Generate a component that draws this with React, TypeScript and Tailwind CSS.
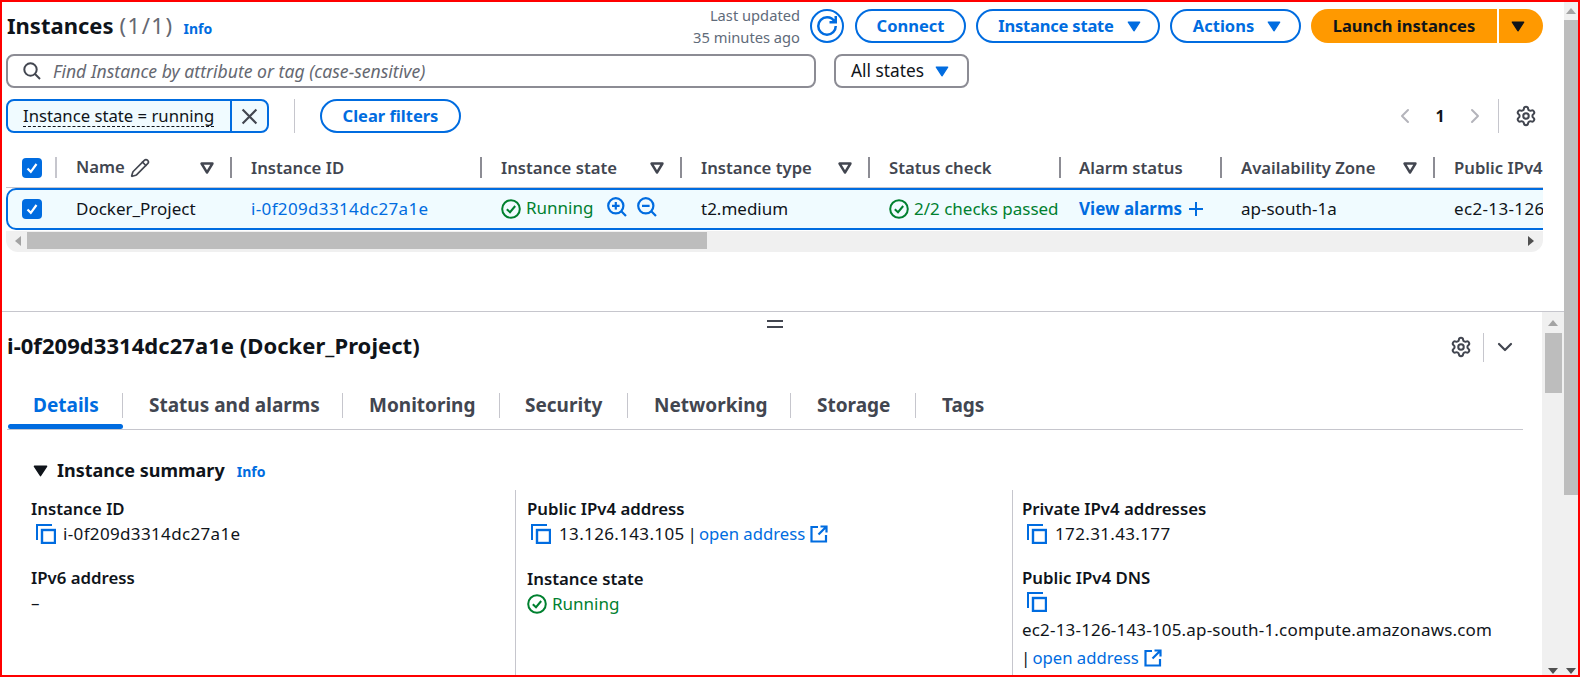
import React from 'react';
import { Pencil, Settings, ChevronDown, ChevronLeft, ChevronRight } from 'lucide-react';

const Caret = ({ className = '', size = 14 }: { className?: string; size?: number }) => (
  <svg viewBox="0 0 16 16" width={size} height={size} className={`shrink-0 ${className}`}>
    <path d="M1.5 3.5h13L8 13.5z" fill="currentColor" stroke="currentColor" strokeWidth="1.5" strokeLinejoin="round" />
  </svg>
);

const FilterCaret = () => (
  <svg viewBox="0 0 16 16" width={16} height={16} className="text-[#424650] shrink-0">
    <path d="M2.5 3.5h11L8 12.5z" fill="none" stroke="currentColor" strokeWidth="2.4" strokeLinejoin="round" />
  </svg>
);

const Copy = ({ className = '' }: { className?: string }) => (
  <svg viewBox="0 0 20 20" width={20} height={20} className={`text-[#006ce0] shrink-0 ${className}`}>
    <path d="M1 16V1h15" fill="none" stroke="currentColor" strokeWidth="2" />
    <rect x="6" y="6" width="13" height="13" fill="#fff" stroke="currentColor" strokeWidth="2.4" />
  </svg>
);

const External = () => (
  <svg viewBox="0 0 18 18" width={18} height={18} className="text-[#006ce0] shrink-0">
    <path d="M8 2H1.5v14.5H16V10M10.5 1.5h6v6M16.5 1.5 8.5 9.5" fill="none" stroke="currentColor" strokeWidth="2.2" />
  </svg>
);

const StatusOk = () => (
  <svg viewBox="0 0 20 20" width={20} height={20} className="text-[#00802f] shrink-0">
    <circle cx="10" cy="10" r="8.8" fill="none" stroke="currentColor" strokeWidth="2" />
    <path d="M5.8 10.2 9 13.2 14.2 7" fill="none" stroke="currentColor" strokeWidth="2" />
  </svg>
);

const Zoom = ({ plus }: { plus?: boolean }) => (
  <svg viewBox="0 0 20 20" width={20} height={20} className="text-[#006ce0] shrink-0">
    <circle cx="8.8" cy="8.8" r="7.6" fill="none" stroke="currentColor" strokeWidth="2.2" />
    <path d="M14.3 14.3 19 19M5 8.8h7.6" fill="none" stroke="currentColor" strokeWidth="2.2" />
    {plus && <path d="M8.8 5v7.6" fill="none" stroke="currentColor" strokeWidth="2.2" />}
  </svg>
);

const Check = () => (
  <div className="w-5 h-5 rounded-[4px] bg-[#006ce0] flex items-center justify-center">
    <svg viewBox="0 0 14 14" width={14} height={14}>
      <path d="M2.5 7.5 5.8 10.8 11.5 3" fill="none" stroke="#fff" strokeWidth="2.2" />
    </svg>
  </div>
);

const OutlineButton = ({ children, className = '' }: { children: React.ReactNode; className?: string }) => (
  <button className={`h-[34px] shrink-0 whitespace-nowrap rounded-full border-2 border-[#006ce0] text-[#006ce0] font-bold text-[16.5px] flex items-center justify-center gap-[13px] ${className}`}>
    {children}
  </button>
);

const Field = ({ label, children, className = '' }: { label: string; children: React.ReactNode; className?: string }) => (
  <div className={className}>
    <div className="text-[16.8px] font-semibold leading-[22px] text-[#0f141a]">{label}</div>
    <div className="text-[17px] leading-[22px] mt-[3px] text-[#0f141a]">{children}</div>
  </div>
);

const OpenAddress = () => (
  <a className="text-[#006ce0] text-[16.7px] inline-flex items-center gap-[5px]">
    open address <External />
  </a>
);

export default function App() {
  return (
    <div className="w-[1580px] h-[677px] border-2 border-[#f00] bg-white flex overflow-hidden font-['Noto_Sans',sans-serif] text-[#0f141a]">
      <div className="w-[1562px] flex flex-col">
        {/* instances table panel */}
        <div className="h-[310px] shrink-0 border-b border-[#c6c6cd] pt-[7px] pl-[4px] overflow-hidden">
          <div className="flex items-center h-[34px]">
            <div className="flex-1 flex items-baseline -mt-[2px]">
              <span className="text-[22px] font-bold ml-px">Instances</span>
              <span className="text-[22px] tracking-[1.5px] text-[#656871] ml-[6px]">(1/1)</span>
              <span className="text-[14px] font-bold text-[#006ce0] ml-[10px]">Info</span>
            </div>
            <div className="shrink-0 flex items-center pr-[21px]">
              <div className="text-[14.7px] leading-[22px] text-[#5f6b7a] text-right mr-[10px] whitespace-nowrap">
                Last updated<br />35 minutes ago
              </div>
              <div className="w-[34px] h-[34px] rounded-full border-2 border-[#006ce0] flex items-center justify-center mr-[11px]">
                <svg viewBox="0 0 16 16" width={20} height={20} className="text-[#006ce0]">
                  <path d="M10 5h5V0M15 8c0 3.87-3.13 7-7 7s-7-3.13-7-7 3.13-7 7-7c2.79 0 5.2 1.63 6.32 4" fill="none" stroke="currentColor" strokeWidth="2" />
                </svg>
              </div>
              <OutlineButton className="w-[111px] mr-[10px]">Connect</OutlineButton>
              <OutlineButton className="w-[184px] mr-[10px] pl-[3px] tracking-[-0.2px]">Instance state <Caret /></OutlineButton>
              <OutlineButton className="w-[131px] mr-[10px] pl-[3px]">Actions <Caret /></OutlineButton>
              <div className="flex h-[34px] font-bold text-[16.5px] text-[#0f141a] whitespace-nowrap">
                <div className="w-[186px] bg-[#ff9900] rounded-l-full flex items-center justify-center">Launch instances</div>
                <div className="w-[44px] ml-[2px] bg-[#ff9900] rounded-r-full flex items-center justify-center pr-[6px]"><Caret /></div>
              </div>
            </div>
          </div>

          <div className="flex mt-[11px] h-[34px]">
            <div className="w-[810px] border-2 border-[#8c8c94] rounded-lg flex items-center pl-[15px]">
              <svg viewBox="0 0 18 18" width={18} height={18} className="text-[#424650]">
                <circle cx="7.5" cy="7.5" r="6.2" fill="none" stroke="currentColor" strokeWidth="2" />
                <path d="M12 12 17 17" stroke="currentColor" strokeWidth="2" />
              </svg>
              <span className="ml-[12px] text-[17.6px] italic text-[#656871]">Find Instance by attribute or tag (case-sensitive)</span>
            </div>
            <div className="w-[135px] ml-[18px] border-2 border-[#8c8c94] rounded-lg flex items-center pl-[15px] gap-[11px] text-[17.3px] pb-px">
              All states <Caret className="text-[#006ce0] mt-px" />
            </div>
          </div>

          <div className="flex items-center mt-[11px] h-[34px]">
            <div className="w-[263px] h-[34px] border-2 border-[#006ce0] rounded-lg bg-[#f0fbff] flex items-center">
              <div className="w-[224px] h-full border-r-2 border-[#006ce0] pl-[15px] flex items-center text-[16.7px] whitespace-nowrap">
                <span className="border-b border-dashed border-[#0f141a] leading-[21px]">Instance state = running</span>
              </div>
              <div className="flex-1 flex items-center justify-center">
                <svg viewBox="0 0 16 16" width={17} height={17} className="text-[#424650]">
                  <path d="M1.5 1.5 14.5 14.5M14.5 1.5 1.5 14.5" stroke="currentColor" strokeWidth="2" />
                </svg>
              </div>
            </div>
            <div className="w-px h-[34px] bg-[#c6c6cd] ml-[25px]" />
            <OutlineButton className="w-[141px] ml-[25px]">Clear filters</OutlineButton>
            <div className="flex-1 flex items-center justify-end pr-[27px]">
              <ChevronLeft size={24} strokeWidth={2} className="text-[#b4b4bb]" />
              <span className="text-[16px] font-bold w-[46px] text-center text-[#0f141a]">1</span>
              <ChevronRight size={24} strokeWidth={2} className="text-[#b4b4bb]" />
              <div className="w-px h-[34px] bg-[#c6c6cd] ml-[11px] mr-[16px]" />
              <Settings size={22} strokeWidth={2.2} className="text-[#424650]" />
            </div>
          </div>

          {/* table */}
          <div className="w-[1537px] overflow-hidden mt-[24px]">
            <div className="w-[1800px] grid grid-cols-[49px_175px_250px_200px_188px_191px_161px_213px_300px] h-[21px] text-[16.7px] font-semibold text-[#424650] leading-[21px] whitespace-nowrap">
              <div className="pl-[16px] flex items-center"><Check /></div>
              <div className="border-l-2 border-[#c6c6cd] pl-[19px] pr-[15px] flex items-center">
                <span className="-mt-[3px]">Name</span>
                <Pencil size={20} strokeWidth={2} className="ml-[5px]" />
                <span className="ml-auto"><FilterCaret /></span>
              </div>
              <div className="border-l-2 border-[#8c8c94] pl-[19px] flex items-center">Instance ID</div>
              <div className="border-l-2 border-[#8c8c94] pl-[19px] pr-[15px] flex items-center justify-between">Instance state <FilterCaret /></div>
              <div className="border-l-2 border-[#8c8c94] pl-[19px] pr-[15px] flex items-center justify-between">Instance type <FilterCaret /></div>
              <div className="border-l-2 border-[#8c8c94] pl-[19px] flex items-center">Status check</div>
              <div className="border-l-2 border-[#8c8c94] pl-[18px] flex items-center">Alarm status</div>
              <div className="border-l-2 border-[#8c8c94] pl-[19px] pr-[15px] flex items-center justify-between">Availability Zone <FilterCaret /></div>
              <div className="border-l-2 border-[#8c8c94] pl-[19px] flex items-center">Public IPv4 DNS</div>
            </div>
            <div className="h-px bg-[#c6c6cd] mt-[9px]" />
            <div className="w-[1800px] h-[42px] border-2 border-[#006ce0] rounded-l-[10px] bg-[#f0fbff] grid grid-cols-[47px_175px_250px_200px_188px_191px_161px_213px_300px] items-center text-[17px] whitespace-nowrap">
              <div className="pl-[14px]"><Check /></div>
              <div className="pl-[21px]">Docker_Project</div>
              <div className="pl-[21px] text-[#006ce0] tracking-[0.35px]">i-0f209d3314dc27a1e</div>
              <div className="pl-[21px] flex items-center text-[#00802f]">
                <StatusOk /><span className="ml-[5px] -mt-[2px]">Running</span>
                <span className="ml-[14px] -mt-[5px]"><Zoom plus /></span>
                <span className="ml-[10px] -mt-[5px]"><Zoom /></span>
              </div>
              <div className="pl-[21px]">t2.medium</div>
              <div className="pl-[21px] flex items-center text-[#00802f]"><StatusOk /><span className="ml-[5px]">2/2 checks passed</span></div>
              <div className="pl-[20px] flex items-center text-[#006ce0] font-bold">
                View alarms
                <svg viewBox="0 0 16 16" width={16} height={16} className="ml-[6px]">
                  <path d="M8 1v14M1 8h14" stroke="currentColor" strokeWidth="2" />
                </svg>
              </div>
              <div className="pl-[21px]">ap-south-1a</div>
              <div className="pl-[21px] tracking-[0.35px]">ec2-13-126-143-105.ap-south-1</div>
            </div>
            {/* horizontal scroll */}
            <div className="h-[21px] bg-[#f0f0f0] rounded-b-[12px] flex items-center pb-[2px] mt-px pl-[9px] pr-[9px]">
              <svg viewBox="0 0 6 10" width={6} height={10} className="text-[#a3a3a3]"><path d="M6 0v10L0 5z" fill="currentColor" /></svg>
              <div className="w-[680px] h-[17px] bg-[#bdbdbd] ml-[6px]" />
              <svg viewBox="0 0 6 10" width={6} height={10} className="text-[#505050] ml-auto"><path d="M0 0v10l6-5z" fill="currentColor" /></svg>
            </div>
          </div>
        </div>

        {/* details panel */}
        <div className="flex-1 flex min-h-0">
          <div className="relative flex-1 min-w-0 flex flex-col pl-[5px] pr-[19px] overflow-hidden">
            <div className="absolute left-[765px] top-[8px] w-[16px] h-[8px] border-y-2 border-[#424650]" />

            <div className="flex items-center h-[30px] mt-[20px] shrink-0">
              <span className="text-[22px] font-bold -mt-[3px] tracking-[0.05px]">i-0f209d3314dc27a1e (Docker_Project)</span>
              <div className="ml-auto flex items-center mr-[6px]">
                <Settings size={22} strokeWidth={2.2} className="text-[#424650]" />
                <div className="w-px h-[29px] bg-[#c6c6cd] ml-[11px]" />
                <ChevronDown size={24} strokeWidth={2.2} className="text-[#424650] ml-[9px]" />
              </div>
            </div>

            <div className="flex mt-[31px] h-[37px] shrink-0 border-b border-[#c6c6cd] text-[19px] font-bold text-[#424650] whitespace-nowrap">
              <div className="ml-px w-[115px] flex flex-col text-[#006ce0]">
                <div className="h-[25px] flex items-center pl-[25px] border-r border-[#c6c6cd]">Details</div>
                <div className="h-[5px] mt-[6px] bg-[#006ce0] rounded-full" />
              </div>
              <div className="w-[220px] h-[25px] flex items-center pl-[26px] border-r border-[#c6c6cd]">Status and alarms</div>
              <div className="w-[157px] h-[25px] flex items-center pl-[26px] border-r border-[#c6c6cd]">Monitoring</div>
              <div className="w-[128px] h-[25px] flex items-center pl-[25px] border-r border-[#c6c6cd]">Security</div>
              <div className="w-[163px] h-[25px] flex items-center pl-[26px] border-r border-[#c6c6cd]">Networking</div>
              <div className="w-[125px] h-[25px] flex items-center pl-[26px] border-r border-[#c6c6cd]">Storage</div>
              <div className="h-[25px] flex items-center pl-[26px]">Tags</div>
            </div>

            <div className="flex items-center mt-[27px] h-[26px] shrink-0 pl-[26px]">
              <Caret size={15} className="text-[#0f141a]" />
              <span className="text-[18px] font-bold ml-[9px]">Instance summary</span>
              <span className="text-[14px] font-bold text-[#006ce0] ml-[12px] mt-[2px]">Info</span>
            </div>

            <div className="grid grid-cols-[513px_497px_1fr] flex-1 mt-[7px] -ml-[5px] min-h-0">
              <div className="pl-[29px] pt-[8px]">
                <Field label="Instance ID">
                  <div className="flex items-center pl-[5px] gap-[7px] tracking-[0.35px]"><Copy />i-0f209d3314dc27a1e</div>
                </Field>
                <Field label="IPv6 address" className="mt-[22px]">–</Field>
              </div>
              <div className="border-l border-[#c6c6cd] pl-[11px] pt-[8px]">
                <Field label="Public IPv4 address">
                  <div className="flex items-center pl-[4px]">
                    <Copy className="mr-[8px]" /><span className="tracking-[0.35px]">13.126.143.105</span><span className="ml-[3px] mr-[2px]">|</span><OpenAddress />
                  </div>
                </Field>
                <Field label="Instance state" className="mt-[23px]">
                  <div className="flex items-center text-[#00802f] gap-[5px]"><StatusOk />Running</div>
                </Field>
              </div>
              <div className="border-l border-[#c6c6cd] pl-[9px] pt-[8px]">
                <Field label="Private IPv4 addresses">
                  <div className="flex items-center pl-[5px] gap-[8px] tracking-[0.35px]"><Copy />172.31.43.177</div>
                </Field>
                <Field label="Public IPv4 DNS" className="mt-[22px]">
                  <Copy className="ml-[5px]" />
                  <div className="mt-[7px] whitespace-nowrap tracking-[0.18px]">ec2-13-126-143-105.ap-south-1.compute.amazonaws.com</div>
                  <div className="mt-[6px] flex items-center"><span className="-ml-[1px] mr-[2px]">|</span><OpenAddress /></div>
                </Field>
              </div>
            </div>
          </div>

          {/* panel scrollbar */}
          <div className="w-[22px] bg-[#f0f0f0] flex flex-col items-center pt-[8px] pb-[1px] shrink-0">
            <svg viewBox="0 0 10 6" width={10} height={6} className="text-[#a3a3a3]"><path d="M0 6h10L5 0z" fill="currentColor" /></svg>
            <div className="w-[17px] h-[60px] bg-[#bdbdbd] mt-[7px]" />
            <svg viewBox="0 0 10 6" width={10} height={6} className="text-[#505050] mt-auto"><path d="M0 0h10L5 6z" fill="currentColor" /></svg>
          </div>
        </div>
      </div>

      {/* window scrollbar */}
      <div className="w-[14px] bg-[#f0f0f0] flex flex-col items-center pt-[6px] pb-[1px] shrink-0">
        <svg viewBox="0 0 10 6" width={10} height={6} className="text-[#a3a3a3]"><path d="M0 6h10L5 0z" fill="currentColor" /></svg>
        <div className="w-full h-[475px] bg-[#bdbdbd] mt-[6px]" />
        <svg viewBox="0 0 10 6" width={10} height={6} className="text-[#505050] mt-auto"><path d="M0 0h10L5 6z" fill="currentColor" /></svg>
      </div>
    </div>
  );
}
